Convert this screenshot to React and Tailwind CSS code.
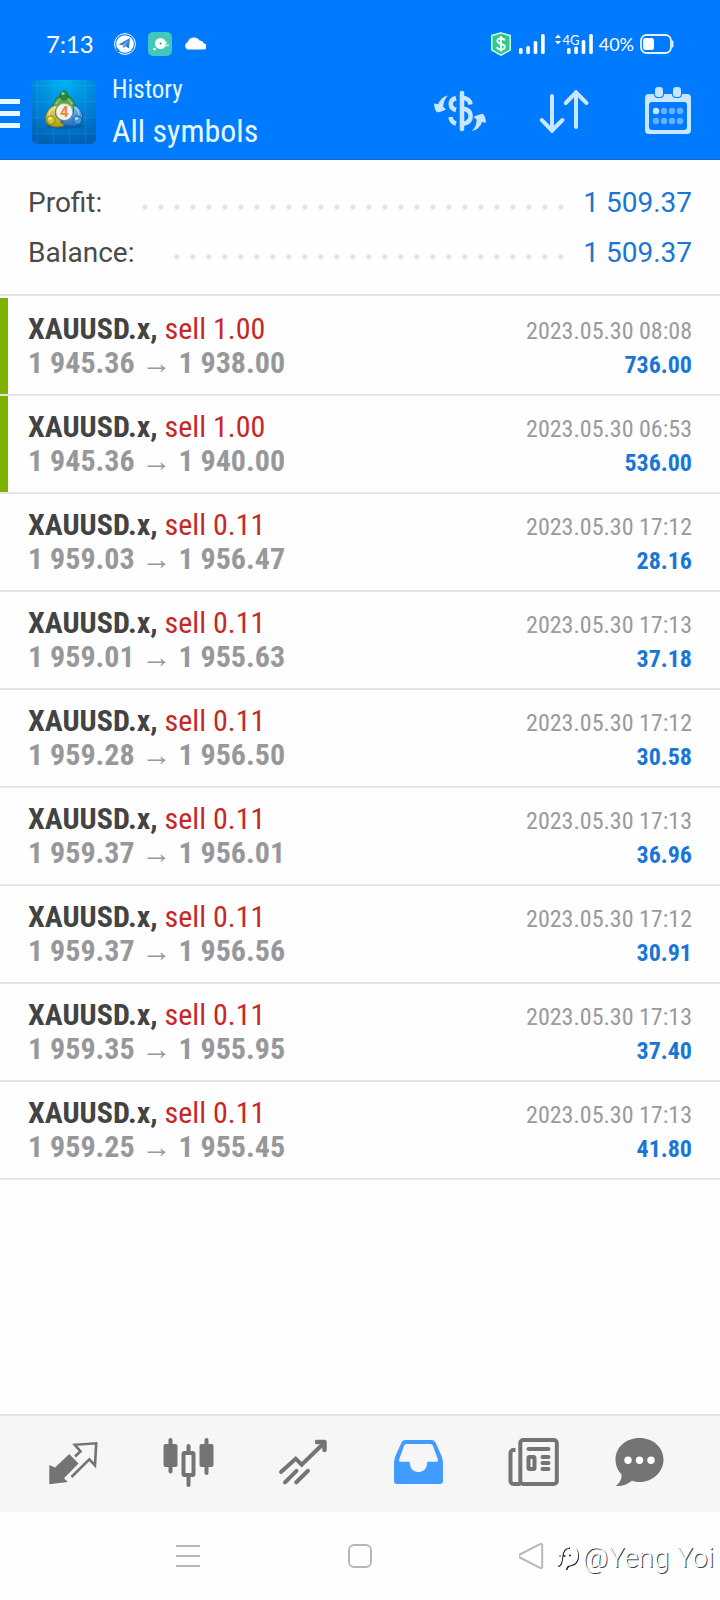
import React from "react";

const trades = [
  { lot: "1.00", open: "1 945.36", close: "1 938.00", time: "2023.05.30 08:08", profit: "736.00", tp: true },
  { lot: "1.00", open: "1 945.36", close: "1 940.00", time: "2023.05.30 06:53", profit: "536.00", tp: true },
  { lot: "0.11", open: "1 959.03", close: "1 956.47", time: "2023.05.30 17:12", profit: "28.16" },
  { lot: "0.11", open: "1 959.01", close: "1 955.63", time: "2023.05.30 17:13", profit: "37.18" },
  { lot: "0.11", open: "1 959.28", close: "1 956.50", time: "2023.05.30 17:12", profit: "30.58" },
  { lot: "0.11", open: "1 959.37", close: "1 956.01", time: "2023.05.30 17:13", profit: "36.96" },
  { lot: "0.11", open: "1 959.37", close: "1 956.56", time: "2023.05.30 17:12", profit: "30.91" },
  { lot: "0.11", open: "1 959.35", close: "1 955.95", time: "2023.05.30 17:13", profit: "37.40" },
  { lot: "0.11", open: "1 959.25", close: "1 955.45", time: "2023.05.30 17:13", profit: "41.80" },
];

const totals = [
  { label: "Profit:", value: "1 509.37" },
  { label: "Balance:", value: "1 509.37" },
];

function StatusBar() {
  return (
    <div className="flex h-[72px] items-center justify-between px-[46px] pt-4 font-['Lato',sans-serif] text-white">
      <div className="flex items-center gap-3">
        <span className="mr-2 text-2xl">7:13</span>
        {/* Telegram */}
        <svg className="h-[22px] w-[22px]" viewBox="0 0 22 22">
          <circle cx="11" cy="11" r="10.4" fill="none" stroke="#fff" strokeWidth="1" />
          <circle cx="11" cy="11" r="8.8" fill="#fff" />
          <path d="M4.500 11.500 16 5l-1 10.500-3.800-2.300-1.700 2-.4-3z" fill="#2f80e0" />
          <path d="m8.500 12.300 6-5.300-3.600 6.200" fill="#7db4f2" />
          <path d="M1.600 15c2 .2 3 .8 4 2.500l-1.400 2z" fill="#007bff" />
        </svg>
        <svg className="h-6 w-6" viewBox="0 0 24 24">
          <rect width="24" height="24" rx="5" fill="#40c8b8" />
          <circle cx="12.5" cy="11.5" r="5.5" fill="#fff" />
          <circle cx="12.5" cy="11.5" r="1" fill="#1e8f80" />
          <circle cx="6.5" cy="17" r="1.3" fill="#fff" />
          <path d="M18.5 10v1M18.5 13v1.5M20 12v2" stroke="#fff" strokeWidth="1" />
        </svg>
        <svg className="h-[22px] w-[22px]" viewBox="0 0 22 22">
          <path d="M4 16.5a4 4 0 0 1-.2-7.6A6.600 6.600 0 0 1 15.600 7.600 5 5 0 0 1 20 10.500a3 3 0 0 1-.5 6z" fill="#fff" />
        </svg>
      </div>
      <div className="flex items-center gap-1.5">
        <svg className="h-6 w-5" viewBox="0 0 20 24">
          <path d="M10 .8 19.200 3.500v14.500L10 23.200.8 18V3.500z" fill="#2fc98a" stroke="#d8fff2" strokeWidth="1.400" />
          <path d="M13.700 8.500c-.5-1.500-1.800-2.300-3.700-2.300-2.100 0-3.600 1-3.600 2.700 0 3.900 7.400 2 7.400 5.800 0 1.700-1.600 2.800-3.800 2.800s-3.600-1-4-2.600M10 4v15.500" fill="none" stroke="#fff" strokeWidth="1.900" />
        </svg>
        <svg className="ml-0.5 h-6 w-[26px]" viewBox="0 0 26 24">
          <g fill="#fff">
            <rect x="0" y="16" width="3.600" height="6" rx="1.500" />
            <rect x="7.300" y="14" width="3.600" height="8" rx="1.500" />
            <rect x="14.700" y="9" width="3.600" height="13" rx="1.500" />
            <rect x="22.100" y="2" width="3.600" height="20" rx="1.500" />
          </g>
        </svg>
        <svg className="ml-1 h-6 w-[38px]" viewBox="0 0 38 24">
          <text x="7.500" y="13" fontSize="13" fill="#fff">4G</text>
          <g fill="#fff">
            <path d="m0 6 3-3.500L6 6zM0 9l3 3.500L6 9z" />
            <rect x="12" y="16" width="3.600" height="6" rx="1.500" />
            <rect x="19.300" y="14.500" width="3.600" height="7.500" rx="1.500" />
            <rect x="26.700" y="8" width="3.600" height="14" rx="1.500" />
            <rect x="34.200" y="2" width="3.600" height="20" rx="1.500" />
          </g>
        </svg>
        <span className="text-lg">40%</span>
        <svg className="h-6 w-[34px]" viewBox="0 0 34 24">
          <rect x="1" y="3" width="30" height="18" rx="5.500" fill="none" stroke="#e0f2ff" strokeWidth="1.800" />
          <rect x="3" y="6" width="11" height="12" rx="2.500" fill="#fff" />
          <path d="M32.500 9.500v5" stroke="#e0f2ff" strokeWidth="2" strokeLinecap="round" />
        </svg>
      </div>
    </div>
  );
}

function AppLogo() {
  return (
    <svg className="mt-2 h-16 w-16" viewBox="0 0 64 64">
      <defs>
        <radialGradient id="sky" cx=".5" cy="0" r="1">
          <stop offset="0" stopColor="#00b4f0" />
          <stop offset=".55" stopColor="#0083d6" />
          <stop offset="1" stopColor="#0061b4" />
        </radialGradient>
        <linearGradient id="green" x1="0" y1="0" x2="0" y2="1">
          <stop offset="0" stopColor="#2f8a3a" />
          <stop offset="1" stopColor="#8fd06a" />
        </linearGradient>
        <linearGradient id="yellow" x1="0" y1="0" x2="0" y2="1">
          <stop offset="0" stopColor="#e9e07a" />
          <stop offset="1" stopColor="#b09a14" />
        </linearGradient>
        <linearGradient id="blue" x1="0" y1="0" x2="0" y2="1">
          <stop offset="0" stopColor="#7cc4ee" />
          <stop offset="1" stopColor="#1c72c0" />
        </linearGradient>
      </defs>
      <rect width="64" height="64" rx="5" fill="url(#sky)" />
      <path d="M5.500 0v64M21.500 0v64M37.500 0v64M53.500 0v64M0 5.500h64M0 21.500h64M0 37.500h64M0 53.500h64" stroke="#5cc4f4" strokeOpacity=".15" />
      <ellipse cx="33" cy="46" rx="19" ry="3" fill="#003f80" opacity=".35" />
      <path d="M21 32c-1-9 3-17 11-17s12 8 11 17l-5-4c-3-3-9-3-12 0z" fill="url(#green)" stroke="#1f6a2c" strokeWidth=".8" />
      <path d="M26 25c-6 0-12 5-12.500 14 0 6 6 8 12 8 4 0 7-1 8-3l-8-6c-3-3-3-8 .5-13z" fill="url(#yellow)" stroke="#7d700c" strokeWidth=".8" />
      <path d="M41 25c6 1 10 7 9.500 14-.5 6-7 8-12 7-5-.5-8-2-10-4l8-3c4-2 6-7 4.500-14z" fill="url(#blue)" stroke="#15508c" strokeWidth=".8" />
      <path d="M24 24c2-4 5-6 8-6s6 2 8 6M17 36c0-4 3-7 6-8M47 36c0-3-1-6-3-8" fill="none" stroke="#fff" strokeOpacity=".45" strokeWidth="1.200" />
      <ellipse cx="32" cy="15.500" rx="3.800" ry="4.500" fill="#2c8a40" stroke="#1b5c28" strokeWidth=".7" />
      <circle cx="19" cy="40" r="4.200" fill="#d2c234" stroke="#7d700c" strokeWidth=".7" />
      <circle cx="45.500" cy="40" r="4.200" fill="#3f9ae0" stroke="#15508c" strokeWidth=".7" />
      <ellipse cx="31" cy="13.500" rx="1.600" ry="1.200" fill="#9fe0a0" />
      <ellipse cx="18" cy="38.500" rx="1.600" ry="1.200" fill="#fbf6b0" />
      <ellipse cx="44.500" cy="38.500" rx="1.600" ry="1.200" fill="#c4e6ff" />
      <circle cx="32.300" cy="32" r="8.300" fill="#f4f2ee" stroke="#b9b9ac" strokeWidth=".6" />
      <text x="32.300" y="37.300" textAnchor="middle" fontSize="15" fontWeight="700" fontFamily="Roboto, sans-serif" fill="#ee8440">4</text>
    </svg>
  );
}

function AppBar() {
  return (
    <div className="flex h-[88px] items-start justify-between border-b border-[#1568cc] pr-[26px]">
      <div className="flex items-start">
        <button aria-label="Menu" className="mt-[27px] flex w-5 flex-col gap-[7px]">
          <span className="h-[5px] w-full bg-[#e6f8ff]" />
          <span className="h-[5px] w-full bg-[#e6f8ff]" />
          <span className="h-[5px] w-full bg-[#e6f8ff]" />
        </button>
        <div className="ml-3">
          <AppLogo />
        </div>
        <div className="ml-4 font-['Roboto_Condensed',sans-serif] text-[#e6f8ff]">
          <p className="text-[25px] leading-9">History</p>
          <h1 className="text-[32px] leading-[46px]">All symbols</h1>
        </div>
      </div>
      <div className="flex gap-[52px] pt-3.5 text-[#c9e6ff]">
        <button aria-label="Deals">
          <svg className="block h-12 w-[52px]" viewBox="0 0 52 48">
            <g fill="none" stroke="currentColor" strokeWidth="4.500">
              <path d="M28 7v36" strokeLinecap="round" />
              <path d="M22 12c-7 2-7 10 0 12M16.500 31c.5 3.500 2 5.500 5.500 6.500" />
              <path d="M28 12c5 0 8 2 8.500 6.500M28 22.500c5 .5 8.700 3 8.700 7.700 0 5-3.700 7.300-8.700 7.800" />
            </g>
            <g fill="currentColor">
              <path d="M14 9.500C9 10.500 5.500 14 4.300 18.300L0 17.500c.2 3.500 1 6.500 3 9 3-.5 6-1.300 9-3l-2.800-2.700C9.600 16 11 12.500 14 9.500z" />
              <path d="M38 45c5-1 8.800-4.500 9.800-9l4.200.7c-.2-3.500-1-6.500-3-9-3.300.5-6.200 1.500-9.300 3.300l3 2.700C42.500 38 41 42 38 45z" />
            </g>
          </svg>
        </button>
        <button aria-label="Sort">
          <svg className="block h-12 w-[52px]" viewBox="0 0 52 48" fill="none" stroke="currentColor" strokeWidth="4" strokeLinecap="round" strokeLinejoin="round">
            <path d="M14 10v35M3.700 34 14 44.500 24.500 34" />
            <path d="M38 41V6M27.700 17 38 6.500 48.500 17" />
          </svg>
        </button>
        <button aria-label="Period">
          <svg className="block h-12 w-[52px]" viewBox="0 0 52 48">
            <rect x="3" y="8" width="46" height="40" rx="4" fill="currentColor" />
            <rect x="7" y="16" width="38" height="28" rx="3" fill="#007bff" />
            <rect x="12" y="0" width="10" height="12" rx="4" fill="#007bff" />
            <rect x="30" y="0" width="10" height="12" rx="4" fill="#007bff" />
            <rect x="13" y="1" width="8" height="10" rx="3.200" fill="currentColor" />
            <rect x="31" y="1" width="8" height="10" rx="3.200" fill="currentColor" />
            <circle cx="14" cy="25" r="3.200" fill="currentColor" />
            <g fill="#66b0ff">
              <circle cx="22" cy="25" r="3.200" />
              <circle cx="30" cy="25" r="3.200" />
              <circle cx="38" cy="25" r="3.200" />
              <circle cx="14" cy="35" r="3.200" />
              <circle cx="22" cy="35" r="3.200" />
              <circle cx="30" cy="35" r="3.200" />
              <circle cx="38" cy="35" r="3.200" />
            </g>
          </svg>
        </button>
      </div>
    </div>
  );
}

function TotalRow({ label, value }) {
  return (
    <div className="flex h-[50px] items-center text-[28px]">
      <dt className="text-[#4a4a4a]">{label}</dt>
      <span className="mt-2 mr-3.5 ml-8 h-4 flex-1 bg-[radial-gradient(circle,#e2e2e2_2px,transparent_3px)] bg-[size:16px_16px] bg-right bg-repeat-x" />
      <dd className="text-[#1976d2]">{value}</dd>
    </div>
  );
}

function TradeRow({ lot, open, close, time, profit, tp }) {
  return (
    <li className="flex border-b-2 border-[#e4e4e4]">
      <span className={tp ? "w-2 bg-[#7db000]" : "w-2"} />
      <div className="flex-1 py-3.5 pr-7 pl-5 font-['Roboto_Condensed','Liberation_Sans',sans-serif] text-[30px] leading-[34px]">
        <div className="flex items-baseline justify-between">
          <p className="text-[#c62828]">
            <b className="font-bold text-[#434343]">XAUUSD.x,</b> sell {lot}
          </p>
          <time className="text-2xl leading-7 text-[#999a9d]">{time}</time>
        </div>
        <div className="flex items-baseline justify-between">
          <p className="font-bold text-[#97989c]">
            {open} <span>→</span> {close}
          </p>
          <span className="text-2xl leading-7 font-bold text-[#1976d8]">{profit}</span>
        </div>
      </div>
    </li>
  );
}

function Tab({ label, className = "", children }) {
  return (
    <button aria-label={label} className={`flex justify-center ${className}`}>
      <svg className="h-[52px] w-[52px] overflow-visible" viewBox="0 0 52 52">
        {children}
      </svg>
    </button>
  );
}

function TabBar() {
  return (
    <nav className="grid h-[98px] grid-cols-6 items-center border-t-2 border-[#e4e4e4] bg-[#f6f6f6] px-4 text-[#747474]">
      <Tab label="Quotes">
        <path d="M2.300 27v19.200l18.500-2.200-3.800-3.700 14.500-14.800-9.200-9.500L8 29.500z" fill="currentColor" />
        <path d="m28 18.500 5.500-5.200-5.700-6.500 21.400-1.500-1.200 22-5.700-6L24.500 39" fill="none" stroke="currentColor" strokeWidth="2.600" />
      </Tab>
      <Tab label="Chart">
        <g fill="currentColor">
          <rect x="1.500" y="6" width="14" height="23" rx="2" />
          <rect x="6.500" y="0" width="4" height="35.500" rx="2" />
          <rect x="37.500" y="6" width="14" height="23" rx="2" />
          <rect x="42.500" y="0" width="4" height="37" rx="2" />
          <rect x="24.500" y="6" width="4" height="9" rx="2" />
          <rect x="24.500" y="37" width="4" height="12" rx="2" />
        </g>
        <rect x="21.500" y="15" width="10" height="22" rx="1" fill="none" stroke="currentColor" strokeWidth="4" />
      </Tab>
      <Tab label="Trade">
        <g fill="none" stroke="currentColor" strokeWidth="4" strokeLinecap="round">
          <path d="m4 34 14.700-13.300 6 6L47 5" />
          <path d="M40 4h7.500v8" strokeWidth="4.500" strokeLinejoin="round" />
          <path d="m8 44.300 11.500-11.500M19.300 44.300 31 32.800" />
        </g>
      </Tab>
      <Tab label="History" className="text-[#429bff]">
        <path
          fillRule="evenodd"
          fill="currentColor"
          d="M14.500 2h26c2 0 3.200.8 4 2.500l5 11c1.500 3.500 2.500 6.500 2.500 10V43a3 3 0 0 1-3 3H6a3 3 0 0 1-3-3V25.500c0-3.500 1-6.500 2.500-10l5-11c.8-1.700 2-2.500 4-2.500zM16 6c-1.500 0-2.300.5-3 2L8.300 21c-.6 1.700-.3 2.700 1.200 2.700h9.200C18.700 30 22 34 27.500 34s8.800-4 8.800-10.300h9.200c1.500 0 1.800-1 1.200-2.700L42 8c-.7-1.500-1.500-2-3-2z"
        />
      </Tab>
      <Tab label="News">
        <g fill="none" stroke="currentColor" strokeWidth="4" strokeLinecap="round">
          <rect x="14.300" y="2" width="36.500" height="44" rx="3" />
          <path d="M9.500 12H7.500a3 3 0 0 0-3 3v28a3 3 0 0 0 3 3h7" strokeLinecap="butt" />
          <path d="M22.500 11h20M36.500 19h6M36.500 25h6M36.500 31h6" />
          <rect x="22.500" y="19" width="6" height="12" rx="1" />
        </g>
      </Tab>
      <Tab label="Messages" className="pr-5">
        <path d="M28.500 0c13.500 0 24 9.300 24 21.500S42 44 28.500 44c-2.700 0-5-.3-7.500-1.200C16 46.500 11 48.500 5 48c3.500-3 6-7 5.500-11.500C6.500 32.500 4.500 27.500 4.500 21.500 4.500 9.300 15 0 28.500 0z" fill="currentColor" />
        <g fill="#fff">
          <circle cx="17" cy="22.300" r="3.700" />
          <circle cx="28.500" cy="22.300" r="3.700" />
          <circle cx="40" cy="22.300" r="3.700" />
        </g>
      </Tab>
    </nav>
  );
}

function SystemNav() {
  return (
    <div className="relative grid h-[88px] grid-cols-3 items-center justify-items-center bg-[#fefefe] px-[102px] text-[#b8b8b8]">
      <button aria-label="Recent apps">
        <svg className="block h-[26px] w-[26px]" viewBox="0 0 26 26" stroke="currentColor" strokeWidth="2">
          <path d="M1 3h24M1 13h24M1 23h24" />
        </svg>
      </button>
      <button aria-label="Home">
        <svg className="block h-[26px] w-[26px]" viewBox="0 0 26 26" fill="none" stroke="currentColor" strokeWidth="2">
          <rect x="2" y="2" width="22" height="22" rx="5" />
        </svg>
      </button>
      <button aria-label="Back">
        <svg className="block h-[26px] w-[26px]" viewBox="0 0 26 26" fill="none" stroke="currentColor" strokeWidth="2" strokeLinejoin="round">
          <path d="M21 1.200 .8 11.500c-1.200.7-1.200 2.300 0 3L21 24.800c1.200.6 2.200 0 2.200-1.300v-21c0-1.300-1-1.900-2.200-1.300z" />
        </svg>
      </button>
      <div className="absolute right-1.5 bottom-[26px] flex items-center gap-0.5 text-[28px] leading-8 font-light text-white [text-shadow:1px_1px_0_#444]">
        <svg className="h-7 w-6" viewBox="0 0 24 28" fill="none">
          <g stroke="#222" strokeWidth="1.500" transform="translate(1 1)">
            <path d="M1 21c3.500 0 4-4 4.500-9S8 3 13 3M2.500 11h6M12 10.500h2" />
            <path d="M19 4c3.500 5 3 13-2 15.500-2 1-4 1-5 1.500-1.500.8-2 2.500-2.500 4" />
          </g>
          <path d="M1 21c3.500 0 4-4 4.500-9S8 3 13 3M19 4c3.500 5 3 13-2 15.500-2 1-4 1-5 1.500" stroke="#fff" strokeWidth="1.800" />
        </svg>
        <span>@Yeng Yoi</span>
      </div>
    </div>
  );
}

export default function App() {
  return (
    <div className="flex min-h-screen flex-col bg-[#fefefe] font-['Roboto',sans-serif]">
      <header className="bg-[#007bff]">
        <StatusBar />
        <AppBar />
      </header>
      <main className="flex-1">
        <dl className="border-b-2 border-[#e4e4e4] px-7 pt-[18px] pb-4">
          {totals.map((t) => (
            <TotalRow key={t.label} {...t} />
          ))}
        </dl>
        <ul className="pt-0.5">
          {trades.map((t, i) => (
            <TradeRow key={i} {...t} />
          ))}
        </ul>
      </main>
      <TabBar />
      <SystemNav />
    </div>
  );
}
